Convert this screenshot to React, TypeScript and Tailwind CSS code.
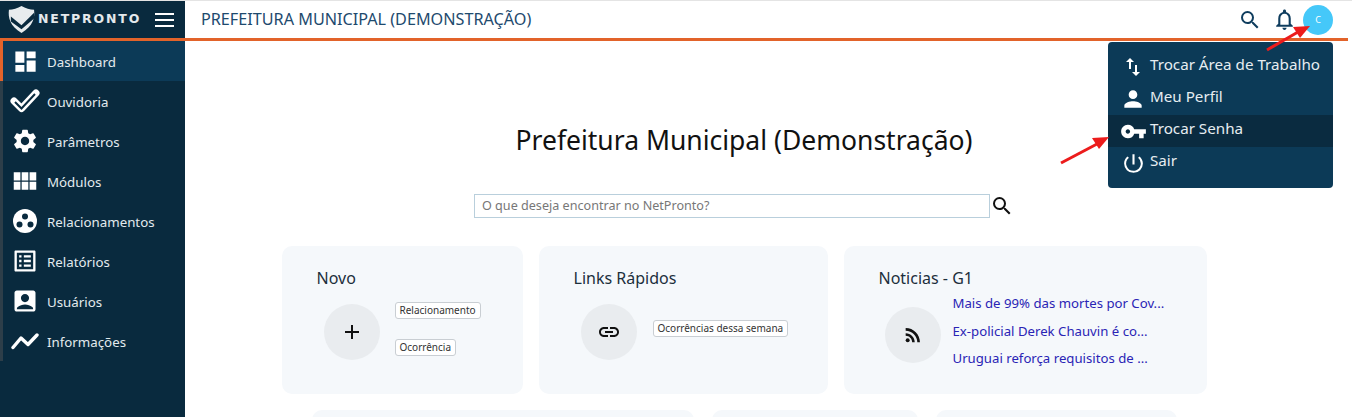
import React from 'react';
import {
  MdDashboard,
  MdSettings,
  MdViewModule,
  MdListAlt,
  MdAccountBox,
  MdSearch,
  MdNotificationsNone,
  MdImportExport,
  MdPerson,
  MdVpnKey,
  MdPowerSettingsNew,
  MdAdd,
  MdLink,
  MdRssFeed,
} from 'react-icons/md';

const CheckIcon = () => (
  <svg width="30" height="26" viewBox="0 0 30 26" fill="none">
    <path d="M4 13l7.5 7.5L26 5" stroke="#fff" strokeWidth="7" strokeLinecap="round" strokeLinejoin="round" />
    <path d="M5 14l6.5 6.5L25 6" stroke="#092a3e" strokeWidth="2" />
  </svg>
);

const CirclesIcon = () => (
  <svg width="26" height="26" viewBox="0 0 26 26">
    <circle cx="13" cy="13" r="12" fill="#fff" />
    <circle cx="13" cy="8.5" r="3" fill="#092a3e" />
    <circle cx="7.5" cy="16.5" r="3" fill="#092a3e" />
    <circle cx="18.5" cy="16.5" r="3" fill="#092a3e" />
  </svg>
);

const ChartIcon = () => (
  <svg width="28" height="18" viewBox="0 0 28 18" fill="none" stroke="#fff" strokeWidth="3.4" strokeLinecap="round" strokeLinejoin="round">
    <path d="M2 15.5L10 6l7 6.5L26 3" />
  </svg>
);

const Logo = () => (
  <svg width="29" height="29" viewBox="0 0 30 30">
    <path d="M15 1C11 3 6 5 2 5c-1 8 1 17 13 24 12-7 14-16 13-24-4 0-9-2-13-4z" fill="#e8ecee" />
    <path d="M4 12l11 9L28 8v6L15 25 4 17z" fill="#092a3e" />
  </svg>
);

const menu = [
  { label: 'Dashboard', icon: <MdDashboard size={27} />, active: true },
  { label: 'Ouvidoria', icon: <CheckIcon /> },
  { label: 'Parâmetros', icon: <MdSettings size={28} /> },
  { label: 'Módulos', icon: <MdViewModule size={30} /> },
  { label: 'Relacionamentos', icon: <CirclesIcon /> },
  { label: 'Relatórios', icon: <MdListAlt size={28} /> },
  { label: 'Usuários', icon: <MdAccountBox size={28} /> },
  { label: 'Informações', icon: <ChartIcon /> },
];

const dropdown = [
  { label: 'Trocar Área de Trabalho', icon: <MdImportExport size={24} /> },
  { label: 'Meu Perfil', icon: <MdPerson size={26} /> },
  { label: 'Trocar Senha', icon: <MdVpnKey size={27} />, hover: true },
  { label: 'Sair', icon: <MdPowerSettingsNew size={25} /> },
];

const news = ['Mais de 99% das mortes por Cov...', 'Ex-policial Derek Chauvin é co...', 'Uruguai reforça requisitos de ...'];

const Tag = ({ children }: { children: React.ReactNode }) => (
  <span className="inline-block h-[17px] rounded-[3px] border border-[#c9ced3] bg-white px-[4px] text-[10px] leading-[14px] text-[#333]">{children}</span>
);

const Bubble = ({ children }: { children: React.ReactNode }) => (
  <div className="flex h-[56px] w-[56px] shrink-0 items-center justify-center rounded-full bg-[#e9ecef] text-[#111]">{children}</div>
);

const Card = ({ title, width, children }: { title: string; width: string; children: React.ReactNode }) => (
  <div className={`h-[148px] rounded-[10px] bg-[#f5f8fb] pt-[21px] ${width}`}>
    <h3 className="pl-[35px] text-[16px] leading-[22px] text-[#1c2f3c]">{title}</h3>
    {children}
  </div>
);

export default function App() {
  return (
    <div className="relative flex h-[417px] w-[1352px] flex-col overflow-hidden bg-white font-['Noto_Sans',sans-serif]">
      <div className="h-px bg-[#e4e4e4]" />

      {/* Top bar */}
      <header className="mr-[4px] flex h-[37px] shrink-0">
        <div className="flex w-[185px] items-center bg-[#092a3e] pl-[7px] pr-[11px]">
          <Logo />
          <span className="ml-[2px] flex-1 font-['DejaVu_Sans',sans-serif] text-[12.5px] font-bold tracking-[1.85px] text-[#e4e9ec]">NETPRONTO</span>
          <div className="flex w-[19px] flex-col gap-[4px]">
            <div className="h-[2px] bg-white" />
            <div className="h-[2px] bg-white" />
            <div className="h-[2px] bg-white" />
          </div>
        </div>
        <div className="flex flex-1 items-center pl-[16px]">
          <h1 className="text-[16.2px] text-[#1e4a6e]">PREFEITURA MUNICIPAL (DEMONSTRAÇÃO)</h1>
          <div className="ml-auto flex items-center pr-[14px] text-[#0f3d5e]">
            <MdSearch size={24} />
            <MdNotificationsNone size={25} className="ml-[10px]" />
            <div className="ml-[6px] mr-[1px] flex h-[30px] w-[30px] items-center justify-center rounded-full bg-[#45c8f9] text-[9px] text-white">C</div>
          </div>
        </div>
      </header>
      <div className="mr-[4px] h-[3px] shrink-0 bg-[#e2632a]" />

      <div className="flex min-h-0 flex-1">
        {/* Sidebar */}
        <aside className="w-[185px] shrink-0 bg-[#092a3e]">
          <nav className="border-l-[3px] border-[#2d3e49]">
            {menu.map((item) => (
              <div
                key={item.label}
                className={`relative flex h-[40px] items-center text-[13.3px] text-[#e3eaee] ${item.active ? 'bg-[#0c3a57]' : ''}`}
              >
                {item.active && <div className="absolute -left-[3px] top-0 h-full w-[3px] bg-[#e2632a]" />}
                <div className="flex w-[44px] shrink-0 justify-center text-white">{item.icon}</div>
                <span className="pt-[4px]">{item.label}</span>
              </div>
            ))}
          </nav>
        </aside>

        {/* Main */}
        <main className="flex-1 pr-[49px]">
          <h2 className="mt-[79px] text-center text-[26.5px] leading-[40px] text-[#111]">Prefeitura Municipal (Demonstração)</h2>

          <div className="mt-[34px] flex justify-center">
            <div className="flex h-[24px] w-[516px] items-center border border-[#b9cfdc] pl-[7px] text-[12.6px] text-[#777]">
              O que deseja encontrar no NetPronto?
            </div>
            <MdSearch size={24} className="text-[#111]" />
          </div>

          <div className="mt-[28px] flex justify-center gap-[16px]">
            <Card title="Novo" width="w-[241px]">
              <div className="mt-[3px] flex pl-[42px]">
                <div className="mt-[12px]">
                  <Bubble><MdAdd size={24} /></Bubble>
                </div>
                <div className="ml-[15px] mt-[10px] flex flex-col items-start gap-[20px]">
                  <Tag>Relacionamento</Tag>
                  <Tag>Ocorrência</Tag>
                </div>
              </div>
            </Card>
            <Card title="Links Rápidos" width="w-[289px]">
              <div className="mt-[15px] flex pl-[42px]">
                <Bubble><MdLink size={24} /></Bubble>
                <div className="ml-[16px] mt-[10px]">
                  <Tag>Ocorrências dessa semana</Tag>
                </div>
              </div>
            </Card>
            <Card title="Noticias - G1" width="w-[363px]">
              <div className="mt-px flex pl-[41px]">
                <div className="mt-[17px]">
                  <Bubble><MdRssFeed size={22} /></Bubble>
                </div>
                <div className="ml-[12px] flex flex-col text-[13.2px] leading-[27.5px] text-[#2a24b5]">
                  {news.map((n) => (
                    <span key={n} className="whitespace-nowrap">{n}</span>
                  ))}
                </div>
              </div>
            </Card>
          </div>

          <div className="mt-[16px] flex justify-center gap-[18px]">
            <div className="h-[148px] w-[382px] rounded-[10px] bg-[#f5f8fb]" />
            <div className="h-[148px] w-[206px] rounded-[10px] bg-[#f5f8fb]" />
            <div className="h-[148px] w-[241px] rounded-[10px] bg-[#f5f8fb]" />
          </div>
        </main>
      </div>

      {/* User menu */}
      <div className="absolute left-[1108px] top-[42px] h-[146px] w-[225px] rounded-[4px] bg-[#0c3a57] pt-[9px] text-[15.2px] text-[#e6edf1]">
        {dropdown.map((d) => (
          <div key={d.label} className={`flex h-[32px] items-center ${d.hover ? 'bg-[#0a2b40]' : ''}`}>
            <div className="flex w-[42px] shrink-0 justify-center pl-[8px] text-white">{d.icon}</div>
            <span className="whitespace-nowrap pb-[6px]">{d.label}</span>
          </div>
        ))}
      </div>

      {/* Annotation arrows */}
      <svg className="pointer-events-none absolute left-0 top-0" width="1352" height="417">
        <path d="M1267 50L1298 32" stroke="#ec1c1c" strokeWidth="3" />
        <path d="M1310 26L1293 27L1300 38z" fill="#ec1c1c" />
        <path d="M1061 163L1097 144" stroke="#ec1c1c" strokeWidth="3" />
        <path d="M1109 137L1092 138L1099 149z" fill="#ec1c1c" />
      </svg>
    </div>
  );
}
